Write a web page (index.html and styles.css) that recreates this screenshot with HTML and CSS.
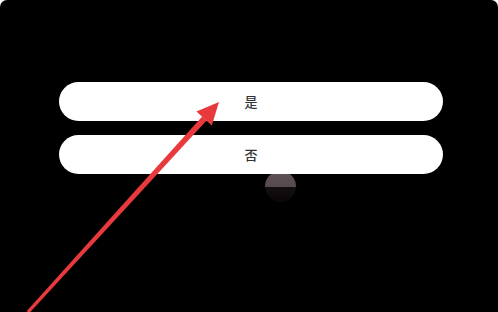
FILE: index.html
```html
<!DOCTYPE html>
<html lang="zh-CN">

<head>
    <meta charset="UTF-8">
    <meta name="viewport" content="width=device-width, initial-scale=1.0">
    <title>确认</title>
    <link rel="stylesheet" href="styles.css">
</head>

<body>
    <div class="screen">
        <div class="choice-list">
            <div class="choice">是</div>
            <div class="choice">否</div>
        </div>

        <div class="spinner"></div>

        <!-- red hint arrow -->
        <svg class="arrow" width="498" height="312" viewBox="0 0 498 312">
            <polygon points="26.8,311 29.2,313.2 206.6,120.6 202.2,116.4" fill="#e83a3c" />
            <polygon points="219,102 196.4,111.4 211.8,125.4" fill="#e83a3c" />
        </svg>
    </div>
</body>

</html>
```

FILE: styles.css
```css
body {
    margin: 0;
    background-color: #ffffff;
    font-family: "Noto Sans CJK SC", "Noto Sans", sans-serif;
    overflow: hidden;
}

.screen {
    position: relative;
    width: 498px;
    height: 312px;
    background-color: #000000;
    border-radius: 7px 7px 0 0;
    box-sizing: border-box;
    padding: 82px 0 0 59px;
}

.choice-list {
    position: relative;
    z-index: 1;
    display: flex;
    flex-direction: column;
    gap: 14px;
    width: 384px;
}

.choice {
    height: 39px;
    border-radius: 20px;
    background-color: #ffffff;
    display: flex;
    justify-content: center;
    align-items: center;
    font-size: 13px;
    font-weight: 500;
    color: #333333;
}

.spinner {
    position: absolute;
    left: 265px;
    top: 171px;
    width: 31px;
    height: 31px;
    border-radius: 50%;
    background: linear-gradient(to bottom, #5e5256 0%, #574b4f 50%, #140e10 50%, #0a0708 100%);
}

.arrow {
    position: absolute;
    z-index: 2;
    left: 0;
    top: 0;
}
```
